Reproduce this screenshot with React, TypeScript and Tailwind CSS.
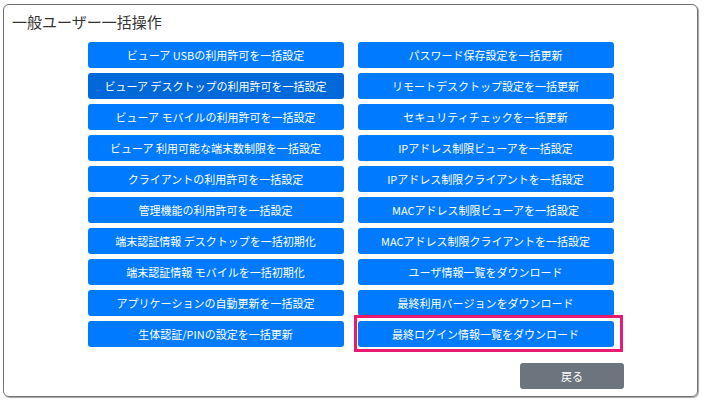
import { Fragment } from "react"

const leftItems = [
  "ビューア USBの利用許可を一括設定",
  "ビューア デスクトップの利用許可を一括設定",
  "ビューア モバイルの利用許可を一括設定",
  "ビューア 利用可能な端末数制限を一括設定",
  "クライアントの利用許可を一括設定",
  "管理機能の利用許可を一括設定",
  "端末認証情報 デスクトップを一括初期化",
  "端末認証情報 モバイルを一括初期化",
  "アプリケーションの自動更新を一括設定",
  "生体認証/PINの設定を一括更新",
]

const rightItems = [
  "パスワード保存設定を一括更新",
  "リモートデスクトップ設定を一括更新",
  "セキュリティチェックを一括更新",
  "IPアドレス制限ビューアを一括設定",
  "IPアドレス制限クライアントを一括設定",
  "MACアドレス制限ビューアを一括設定",
  "MACアドレス制限クライアントを一括設定",
  "ユーザ情報一覧をダウンロード",
  "最終利用バージョンをダウンロード",
  "最終ログイン情報一覧をダウンロード",
]

function ActionButton({ label, active, highlight }: { label: string; active?: boolean; highlight?: boolean }) {
  return (
    <div className="relative">
      <button
        className={
          "w-full h-[26px] rounded-[3px] text-white text-[11px] leading-none flex items-center justify-center " +
          (active ? "bg-[#0069d9]" : "bg-[#007bff]")
        }
      >
        {label}
      </button>
      {highlight && (
        <div className="absolute -left-[4px] -right-[9px] -top-[6px] -bottom-[5px] border-[3px] border-[#ea1a72] pointer-events-none" />
      )}
    </div>
  )
}

export default function App() {
  // pair up so the grid fills row by row
  const rows = leftItems.map((l, i) => [l, rightItems[i]])

  return (
    <div
      className="w-[704px] h-[402px] bg-white pt-[4px] pl-[3px]"
      style={{ fontFamily: '"Noto Sans CJK JP", "Noto Sans", sans-serif' }}
    >
      <div className="w-[695px] h-[393px] border border-[#707070] rounded-[6px] shadow-[1px_1px_1px_rgba(0,0,0,0.35)] pt-[6px]">
        <h1 className="pl-[8px] text-[15px] leading-[22px] text-[#333]">一般ユーザー一括操作</h1>

        <div className="mt-[9px] mx-auto w-[526px] grid grid-cols-2 gap-x-[14px] gap-y-[5px]">
          {rows.map(([l, r], i) => (
            <Fragment key={i}>
              <ActionButton label={l} active={i === 1} />
              <ActionButton label={r} highlight={i === 9} />
            </Fragment>
          ))}
        </div>

        <div className="mt-[16px] flex justify-end pr-[73px]">
          <button className="w-[104px] h-[26px] rounded-[3px] bg-[#6c757d] text-white text-[11px] leading-none">
            戻る
          </button>
        </div>
      </div>
    </div>
  )
}
